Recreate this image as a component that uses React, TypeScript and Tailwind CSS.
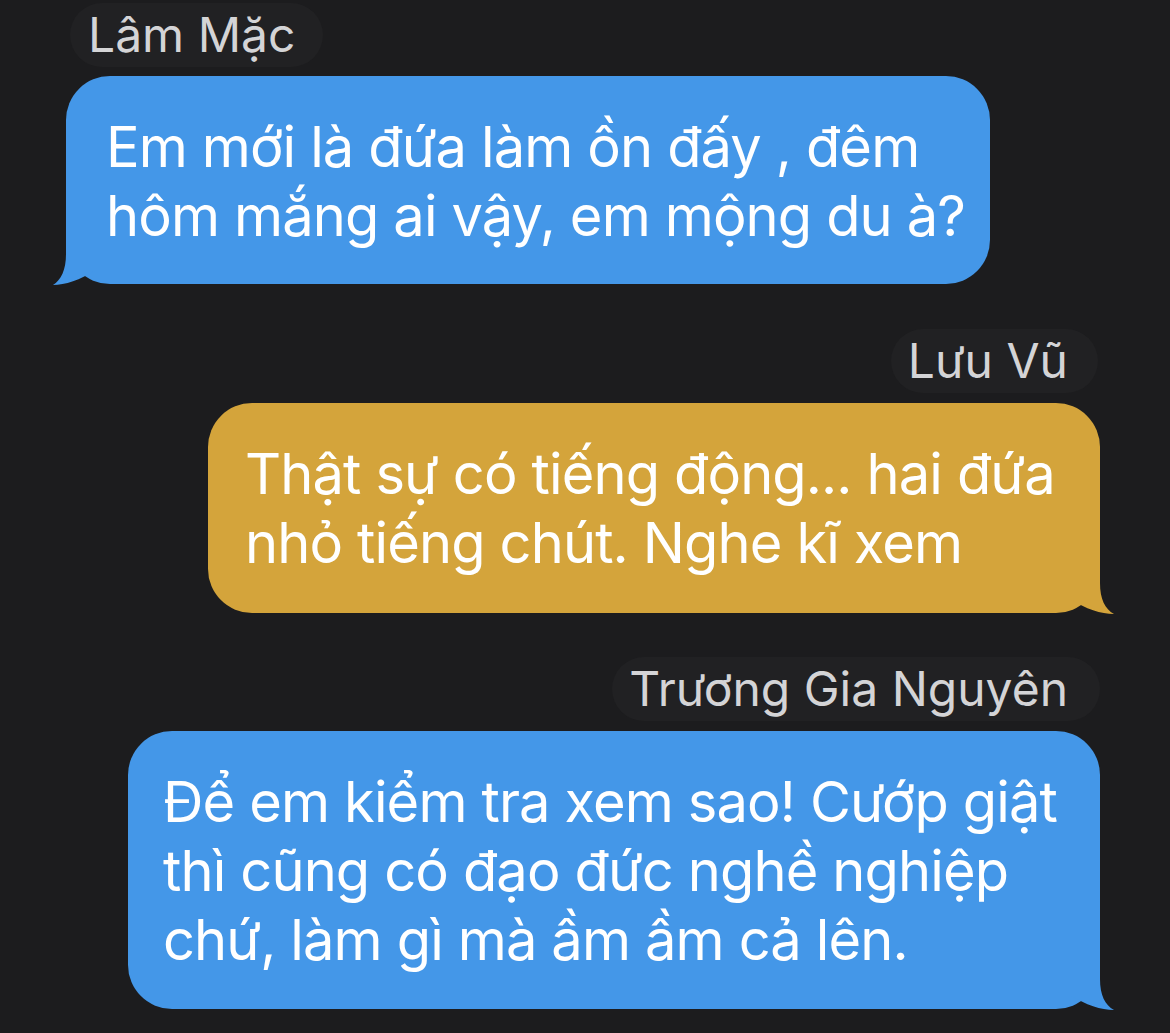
import React from "react";

function TailLeft({ color }: { color: string }) {
  return (
    <svg
      className="absolute -left-[14px] -bottom-[5px] w-[50px] h-[60px] overflow-visible"
      viewBox="-14 -55 50 60"
    >
      <path d="M 0,-50 L 0,-30 C 0,-14 -5,-4 -13,1 C -1,1 14,-4 30,-14 L 30,-50 Z" fill={color} />
    </svg>
  );
}

function TailRight({ color }: { color: string }) {
  return (
    <svg
      className="absolute -right-[14px] -bottom-[5px] w-[50px] h-[60px] overflow-visible"
      viewBox="-36 -55 50 60"
    >
      <path d="M 0,-50 L 0,-30 C 0,-14 5,-4 14,1 C 1,1 -14,-4 -30,-14 L -30,-50 Z" fill={color} />
    </svg>
  );
}

export default function App() {
  const font = { fontFamily: 'Inter, "Noto Sans", "Liberation Sans", sans-serif' };
  return (
    <div
      className="w-[1170px] h-[1033px] bg-[#1c1c1e] overflow-hidden flex flex-col pl-[66px] pr-[70px] pt-[3px]"
      style={font}
    >
      {/* Block 1 */}
      <div className="flex flex-col items-start">
        <div className="ml-[4px] h-[64px] leading-[64px] rounded-full bg-[#212123] pl-[18px] pr-[28px] text-[48px] text-[#d4d4d6] whitespace-nowrap">
          Lâm Mặc
        </div>
        <div className="relative mt-[9px] w-[924px] rounded-[44px] bg-[#4497e8] pl-[40px] pt-[37px] pb-[33px] text-[56px] leading-[69px] tracking-[-0.87px] text-white">
          <TailLeft color="#4497e8" />
          <div className="relative whitespace-nowrap">Em mới là đứa làm ồn đấy , đêm</div>
          <div className="relative whitespace-nowrap">hôm mắng ai vậy, em mộng du à?</div>
        </div>
      </div>

      {/* Block 2 */}
      <div className="mt-[45px] flex flex-col items-end">
        <div className="mr-[2px] h-[64px] leading-[64px] rounded-full bg-[#212123] pl-[17px] pr-[30px] text-[48px] text-[#d4d4d6] whitespace-nowrap">
          Lưu Vũ
        </div>
        <div className="relative mt-[10px] w-[892px] rounded-[44px] bg-[#d4a43b] pl-[37px] pt-[37px] pb-[35px] text-[56px] leading-[69px] tracking-[-0.87px] text-white">
          <TailRight color="#d4a43b" />
          <div className="relative whitespace-nowrap">Thật sự có tiếng động... hai đứa</div>
          <div className="relative whitespace-nowrap">nhỏ tiếng chút. Nghe kĩ xem</div>
        </div>
      </div>

      {/* Block 3 */}
      <div className="mt-[44px] flex flex-col items-end">
        <div className="h-[64px] leading-[64px] rounded-full bg-[#212123] pl-[17px] pr-[32px] text-[48px] text-[#d4d4d6] whitespace-nowrap">
          Trương Gia Nguyên
        </div>
        <div className="relative mt-[10px] w-[972px] rounded-[44px] bg-[#4497e8] pl-[35px] pt-[37px] pb-[34px] text-[56px] leading-[69px] tracking-[-0.87px] text-white">
          <TailRight color="#4497e8" />
          <div className="relative whitespace-nowrap">Để em kiểm tra xem sao! Cướp giật</div>
          <div className="relative whitespace-nowrap">thì cũng có đạo đức nghề nghiệp</div>
          <div className="relative whitespace-nowrap">chứ, làm gì mà ầm ầm cả lên.</div>
        </div>
      </div>
    </div>
  );
}
